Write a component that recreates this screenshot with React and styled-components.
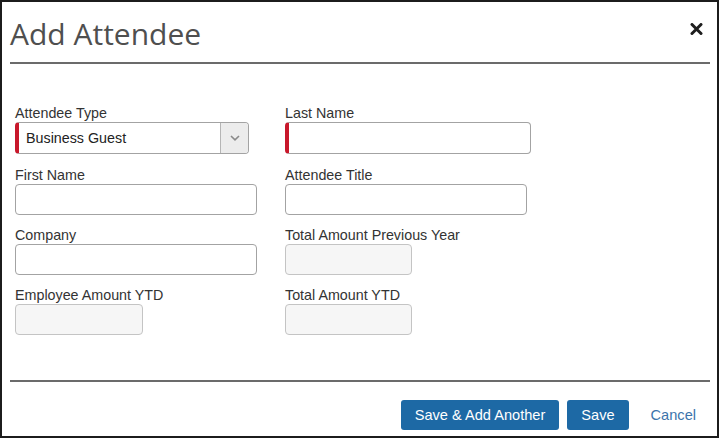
import React from "react";
import styled, { createGlobalStyle } from "styled-components";

const GlobalStyle = createGlobalStyle`
  html, body {
    margin: 0;
    padding: 0;
    background: #ffffff;
  }
  * {
    box-sizing: border-box;
  }
`;

const Dialog = styled.div`
  width: 719px;
  height: 438px;
  border: 2px solid #1c1c1c;
  background: #fff;
  display: flex;
  flex-direction: column;
  font-family: "Liberation Sans", Arial, sans-serif;
`;

const Header = styled.header`
  display: flex;
  align-items: flex-start;
  justify-content: space-between;
  margin: 0 7px 0 8px;
  padding: 12px 0 8px 0;
  border-bottom: 2px solid #6b6b6b;
`;

const Title = styled.h1`
  margin: 0;
  font-family: "Open Sans", sans-serif;
  font-weight: 400;
  font-size: 30px;
  line-height: 40px;
  color: #4f4f4f;
`;

const CloseButton = styled.button`
  border: 0;
  background: none;
  padding: 0;
  margin: 8px 7px 0 0;
  width: 14px;
  height: 13px;
  cursor: pointer;
  display: flex;
  align-items: center;
  justify-content: center;
`;

const Body = styled.div`
  flex: 1;
  padding: 41px 0 0 13px;
  display: grid;
  grid-template-columns: 270px 1fr;
  grid-auto-rows: min-content;
  row-gap: 12px;
`;

const Field = styled.div`
  display: flex;
  flex-direction: column;
  align-items: flex-start;
  margin-bottom: ${({ $first }) => ($first ? 1 : 0)}px;
`;

const Label = styled.label`
  font-size: 14.3px;
  line-height: 17px;
  color: #333;
`;

const Input = styled.div`
  width: ${({ $w }) => $w}px;
  height: ${({ $h }) => $h || 31}px;
  border: 1px solid ${({ $disabled }) => ($disabled ? "#c4c4c4" : "#a3a3a3")};
  border-left: ${({ $required, $disabled }) =>
    $required ? "4px solid #c8182b" : `1px solid ${$disabled ? "#c4c4c4" : "#a3a3a3"}`};
  border-radius: 4px;
  background: ${({ $disabled }) => ($disabled ? "#f6f6f6" : "#fff")};
`;

const Select = styled.div`
  width: ${({ $w }) => $w}px;
  height: 32px;
  border: 1px solid #a3a3a3;
  border-left: 4px solid #c8182b;
  border-radius: 4px;
  display: flex;
  align-items: stretch;
  overflow: hidden;
`;

const SelectValue = styled.span`
  flex: 1;
  padding-left: 7px;
  font-size: 14.3px;
  line-height: 30px;
  color: #222;
`;

const SelectArrow = styled.span`
  width: 28px;
  border-left: 1px solid #b5b5b5;
  background: #ececec;
  display: flex;
  align-items: center;
  justify-content: center;
`;

const Footer = styled.footer`
  margin: 0 7px 0 8px;
  border-top: 2px solid #6b6b6b;
  padding: 18px 3px 6px 0;
  display: flex;
  justify-content: flex-end;
  align-items: center;
  gap: 8px;
`;

const PrimaryButton = styled.button`
  height: 30px;
  padding: 0 14px;
  border: 0;
  border-radius: 3px;
  background: #1d69a5;
  color: #fff;
  font-family: "Liberation Sans", Arial, sans-serif;
  font-size: 14.6px;
  cursor: pointer;
`;

const LinkButton = styled.button`
  height: 30px;
  padding: 0 11px 0 14px;
  border: 0;
  background: none;
  color: #3c74ab;
  font-family: "Liberation Sans", Arial, sans-serif;
  font-size: 14.6px;
  cursor: pointer;
`;

const fields = [
  { label: "Attendee Type", select: "Business Guest", w: 234, first: true },
  { label: "Last Name", w: 246, required: true, first: true },
  { label: "First Name", w: 242 },
  { label: "Attendee Title", w: 242 },
  { label: "Company", w: 242 },
  { label: "Total Amount Previous Year", w: 127, disabled: true },
  { label: "Employee Amount YTD", w: 128, disabled: true },
  { label: "Total Amount YTD", w: 127, disabled: true },
];

export default function App() {
  return (
    <>
      <GlobalStyle />
      <Dialog>
        <Header>
          <Title>Add Attendee</Title>
          <CloseButton aria-label="Close">
            <svg width="13" height="12" viewBox="0 0 13 12">
              <path
                d="M2 1.5 L11 10.5 M11 1.5 L2 10.5"
                stroke="#1e1e1e"
                strokeWidth="3"
                strokeLinecap="round"
              />
            </svg>
          </CloseButton>
        </Header>
        <Body>
          {fields.map((f) => (
            <Field key={f.label} $first={f.first}>
              <Label>{f.label}</Label>
              {f.select ? (
                <Select $w={f.w}>
                  <SelectValue>{f.select}</SelectValue>
                  <SelectArrow>
                    <svg width="10" height="6" viewBox="0 0 10 6">
                      <path
                        d="M1 1 L5 4.8 L9 1"
                        fill="none"
                        stroke="#8a8a8a"
                        strokeWidth="1.6"
                      />
                    </svg>
                  </SelectArrow>
                </Select>
              ) : (
                <Input
                  $w={f.w}
                  $h={f.required ? 32 : 31}
                  $required={f.required}
                  $disabled={f.disabled}
                />
              )}
            </Field>
          ))}
        </Body>
        <Footer>
          <PrimaryButton>Save &amp; Add Another</PrimaryButton>
          <PrimaryButton>Save</PrimaryButton>
          <LinkButton>Cancel</LinkButton>
        </Footer>
      </Dialog>
    </>
  );
}
